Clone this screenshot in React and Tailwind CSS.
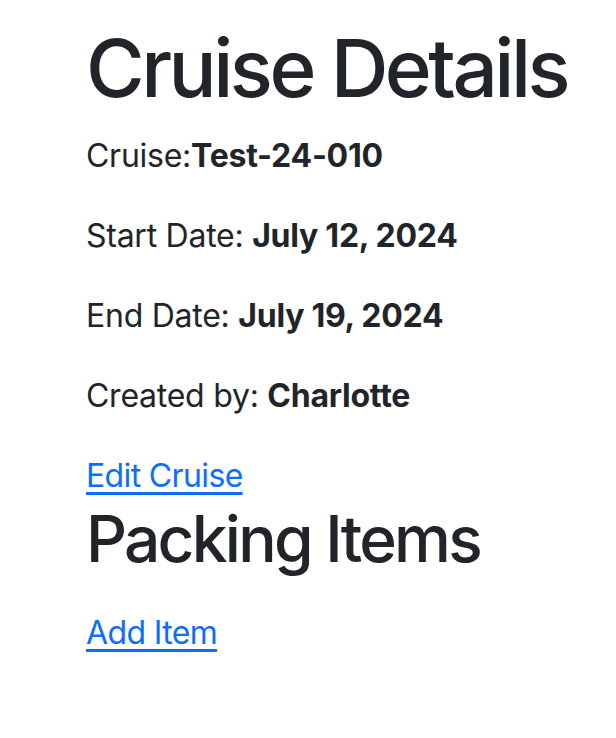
import React from "react";

function Field({ label, value, tight }) {
  return (
    <p className="mb-8 text-[32px] leading-[48px] tracking-[-0.008em]">
      {label}
      {tight ? "" : " "}
      <strong className="font-bold">{value}</strong>
    </p>
  );
}

export default function App() {
  const cruise = {
    name: "Test-24-010",
    start: "July 12, 2024",
    end: "July 19, 2024",
    owner: "Charlotte",
  };

  return (
    <div
      className="min-h-screen bg-white text-[#212529] pt-5 pl-[86px] pr-[40px]"
      style={{ fontFamily: "Inter, 'Noto Sans', sans-serif" }}
    >
      {/* Cruise header */}
      <h1 className="mb-4 whitespace-nowrap text-[80px] leading-[96px] font-medium tracking-[-0.044em]">
        Cruise Details
      </h1>
      <Field label="Cruise:" value={cruise.name} tight />
      <Field label="Start Date:" value={cruise.start} />
      <Field label="End Date:" value={cruise.end} />
      <Field label="Created by:" value={cruise.owner} />
      <div className="text-[32px] leading-[48px] tracking-[-0.02em]">
        <a href="#" className="text-[#0d6efd] underline underline-offset-[5px]">
          Edit Cruise
        </a>
      </div>

      {/* Packing list */}
      <h2 className="mb-8 whitespace-nowrap text-[64px] leading-[77px] font-medium tracking-[-0.043em]">
        Packing Items
      </h2>
      <div className="text-[32px] leading-[48px] tracking-[-0.02em]">
        <a href="#" className="text-[#0d6efd] underline underline-offset-[5px]">
          Add Item
        </a>
      </div>
    </div>
  );
}
